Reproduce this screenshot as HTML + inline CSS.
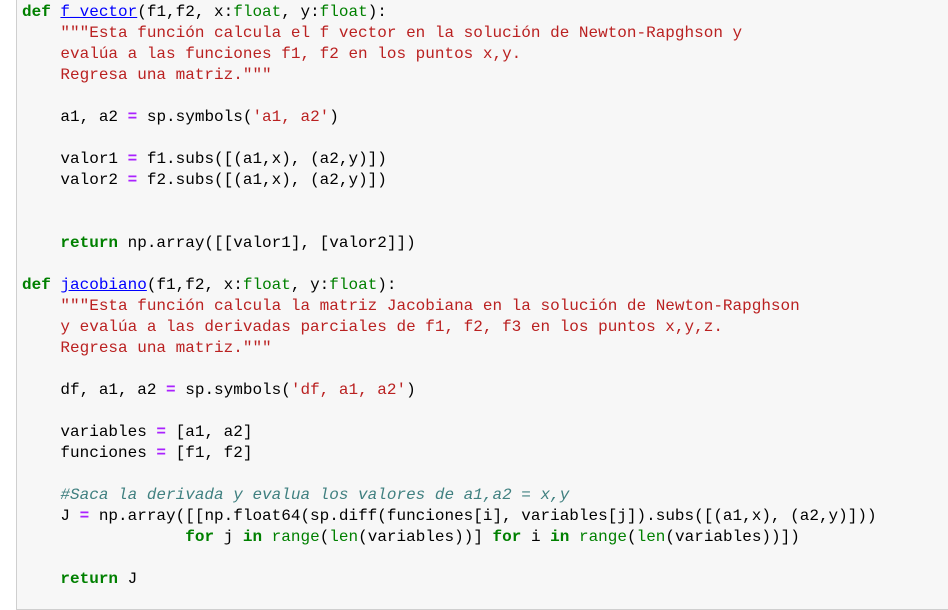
<!DOCTYPE html>
<html><head><meta charset="utf-8"><style>
html,body{margin:0;padding:0;background:#fff;width:948px;height:591px;overflow:hidden}
.cell{position:absolute;left:16px;top:-2px;width:940px;height:610px;background:#f7f7f7;border:1px solid #cfcfcf;}
pre{position:absolute;left:22px;top:2px;margin:0;font-family:"Liberation Mono",monospace;font-size:16px;line-height:21px;color:#000}
.k{color:#008000;font-weight:bold}
.b{color:#008000}
.f{color:#0000ff}
.s{color:#ba2121}
.o{color:#aa22ff;font-weight:bold}
.c{color:#408080;font-style:italic}
</style></head><body>
<div class="cell"></div>
<pre><span class="k">def</span> <span class="f" style="text-decoration:underline">f_vector</span>(f1,f2, x:<span class="b">float</span>, y:<span class="b">float</span>):
    <span class="s">"""Esta función calcula el f vector en la solución de Newton-Rapghson y
    evalúa a las funciones f1, f2 en los puntos x,y.
    Regresa una matriz."""</span>

    a1, a2 <span class="o">=</span> sp.symbols(<span class="s">'a1, a2'</span>)

    valor1 <span class="o">=</span> f1.subs([(a1,x), (a2,y)])
    valor2 <span class="o">=</span> f2.subs([(a1,x), (a2,y)])


    <span class="k">return</span> np.array([[valor1], [valor2]])

<span class="k">def</span> <span class="f" style="text-decoration:underline">jacobiano</span>(f1,f2, x:<span class="b">float</span>, y:<span class="b">float</span>):
    <span class="s">"""Esta función calcula la matriz Jacobiana en la solución de Newton-Rapghson
    y evalúa a las derivadas parciales de f1, f2, f3 en los puntos x,y,z.
    Regresa una matriz."""</span>

    df, a1, a2 <span class="o">=</span> sp.symbols(<span class="s">'df, a1, a2'</span>)

    variables <span class="o">=</span> [a1, a2]
    funciones <span class="o">=</span> [f1, f2]

    <span class="c">#Saca la derivada y evalua los valores de a1,a2 = x,y</span>
    J <span class="o">=</span> np.array([[np.float64(sp.diff(funciones[i], variables[j]).subs([(a1,x), (a2,y)]))
                 <span class="k">for</span> j <span class="k">in</span> <span class="b">range</span>(<span class="b">len</span>(variables))] <span class="k">for</span> i <span class="k">in</span> <span class="b">range</span>(<span class="b">len</span>(variables))])

    <span class="k">return</span> J
</pre>
</body></html>
